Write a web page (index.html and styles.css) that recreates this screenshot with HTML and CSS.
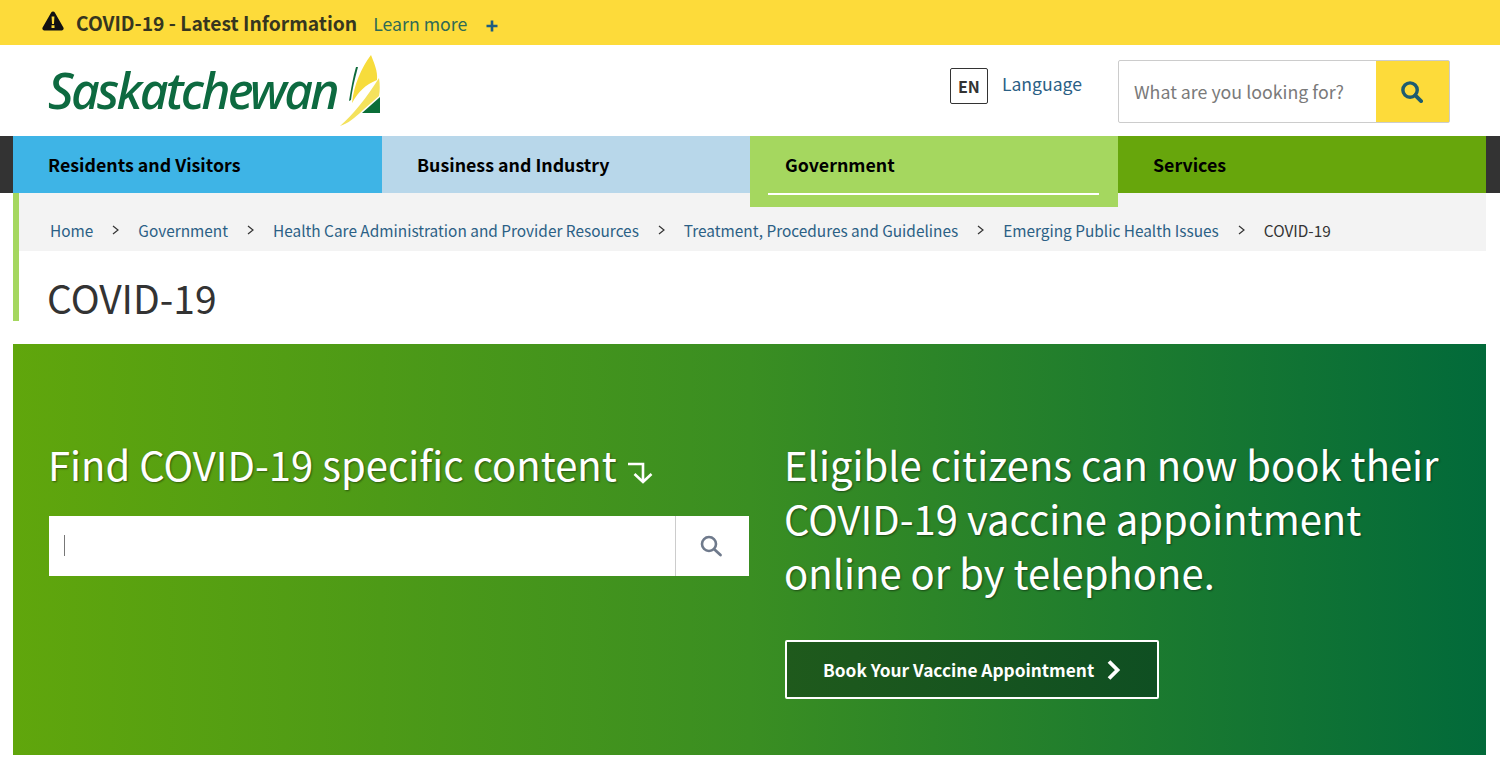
FILE: index.html
```html
<html>
    <head>
        <link rel="stylesheet" href="styles.css">
    </head>
    <body>
        <div class="alert">
            <svg class="alert-icon" viewBox="0 0 22 20"><path d="M11 0.5c.8 0 1.400.4 1.800 1.100l8.600 15c.7 1.300-.2 2.900-1.700 2.900H2.300C.8 19.500-.1 17.900.6 16.600l8.600-15C9.600.9 10.200.5 11 .5z" fill="#111"/><path d="M9.600 5.500h2.800l-.4 7.500h-2zM9.500 14.300h3v2.700h-3z" fill="#fddb3a"/></svg>
            <strong class="alert-title">COVID-19 - Latest Information</strong>
            <a class="alert-link" href="#">Learn more</a>
            <svg class="alert-plus" viewBox="0 0 12 12"><path d="M6 0.500v11M0.500 6h11" stroke="#1d5c80" stroke-width="2.600" fill="none"/></svg>
        </div>
        <header class="header">
            <a class="logo" href="#">
                <span class="logo-text">Saskatchewan</span>
                <svg class="logo-mark" viewBox="0 0 50 75">
                    <path d="M36 2C39 10 43 18 42 27C30 32 24 38 17 50C19 32 26 15 36 2z" fill="#f7dc3b"/>
                    <path d="M44 25C45 32 45 38 44 43L28 57C20 65 12 71 5 73C18 62 32 44 44 25z" fill="#f4e25c"/>
                    <path d="M23 14C21 22 18 32 16 47L14 48C16 36 18 24 21 14z" fill="#0f6b3c"/>
                    <path d="M45 44V60H27z" fill="#0a6e38"/>
                </svg>
            </a>
            <div class="header-right">
                <span class="lang-box">EN</span>
                <a class="lang-link" href="#">Language</a>
                <form class="site-search">
                    <span class="site-search-text">What are you looking for?</span>
                    <span class="site-search-btn">
                        <svg width="23" height="23" viewBox="0 0 24 24"><circle cx="10.500" cy="10.500" r="7.500" stroke="#1d5c70" stroke-width="3.600" fill="none"/><path d="M16 16l6 6" stroke="#1d5c70" stroke-width="4" stroke-linecap="round"/></svg>
                    </span>
                </form>
            </div>
        </header>
        <div class="page">
            <nav class="nav">
                <a class="nav-item residents" href="#">Residents and Visitors</a>
                <a class="nav-item business" href="#">Business and Industry</a>
                <a class="nav-item government" href="#">Government</a>
                <a class="nav-item services" href="#">Services</a>
            </nav>
        </div>
        <div class="content">
            <div class="title-area">
                <div class="breadcrumb">
                    <a href="#">Home</a>
                    <svg class="crumb-sep" viewBox="0 0 7 10"><path d="M1 1l5 4-5 4" stroke="#333" stroke-width="1.200" fill="none"/></svg>
                    <a href="#">Government</a>
                    <svg class="crumb-sep" viewBox="0 0 7 10"><path d="M1 1l5 4-5 4" stroke="#333" stroke-width="1.200" fill="none"/></svg>
                    <a href="#">Health Care Administration and Provider Resources</a>
                    <svg class="crumb-sep" viewBox="0 0 7 10"><path d="M1 1l5 4-5 4" stroke="#333" stroke-width="1.200" fill="none"/></svg>
                    <a href="#">Treatment, Procedures and Guidelines</a>
                    <svg class="crumb-sep" viewBox="0 0 7 10"><path d="M1 1l5 4-5 4" stroke="#333" stroke-width="1.200" fill="none"/></svg>
                    <a href="#">Emerging Public Health Issues</a>
                    <svg class="crumb-sep" viewBox="0 0 7 10"><path d="M1 1l5 4-5 4" stroke="#333" stroke-width="1.200" fill="none"/></svg>
                    <span>COVID-19</span>
                </div>
                <h1 class="title">COVID-19</h1>
            </div>
            <section class="hero">
                <div class="hero-left">
                    <h2 class="hero-find">Find COVID-19 specific content
                        <svg class="hero-arrow" viewBox="0 0 26 24"><path d="M1 4h15v17M7.500 14l8.500 8 8.500-8" stroke="#fff" stroke-width="2.600" fill="none"/></svg>
                    </h2>
                    <div class="hero-search">
                        <span class="hero-input"><i class="caret"></i></span>
                        <span class="hero-search-btn">
                            <svg width="24" height="24" viewBox="0 0 24 24"><circle cx="10" cy="10" r="7" stroke="#6f7a8c" stroke-width="2.600" fill="none"/><path d="M15.500 15.500l6 5.500" stroke="#6f7a8c" stroke-width="2.800" stroke-linecap="round"/></svg>
                        </span>
                    </div>
                </div>
                <div class="hero-right">
                    <h2 class="hero-text">Eligible citizens can now book their COVID-19 vaccine appointment online or by telephone.</h2>
                    <a class="hero-btn" href="#">Book Your Vaccine Appointment
                        <svg class="hero-btn-icon" viewBox="0 0 14 20"><path d="M2 1.500l8.500 8.500-8.500 8.500" stroke="#fff" stroke-width="3.800" fill="none"/></svg>
                    </a>
                </div>
            </section>
        </div>
    </body>
</html>
```

FILE: styles.css
```css
* {
    margin: 0;
    padding: 0;
    box-sizing: border-box;
}

html,body {
    height: 100%;
    overflow: hidden;
}

body {
    background: #fff;
    color: #333;
    font-family: "Noto Sans CJK SC", "Open Sans", sans-serif;
}

a {
    text-decoration: none;
}

.alert {
    height: 45px;
    background: #fddb3a;
    display: flex;
    align-items: center;
    padding-left: 42px;
}

.alert-icon {
    width: 22px;
    height: 20px;
    margin-top: -4px;
}

.alert-title {
    margin-left: 12px;
    font-size: 19.3px;
    font-weight: 600;
    color: #36361f;
}

.alert-link {
    margin-left: 16px;
    font-size: 17.7px;
    color: #2f6a55;
}

.alert-plus {
    width: 12px;
    height: 12px;
    margin-left: 19px;
    margin-top: 6px;
}

.header {
    height: 91px;
    display: flex;
    justify-content: space-between;
    padding: 0 50px 0 48px;
}

.logo {
    display: flex;
    align-items: flex-start;
}

.logo-text {
    width: 287px;
    font-family: "Noto Sans", sans-serif;
    font-style: italic;
    font-size: 50px;
    font-weight: 500;
    line-height: 91px;
    letter-spacing: -2.700px;
    white-space: nowrap;
    color: #0d6a40;
}

.logo-mark {
    width: 50px;
    height: 75px;
    margin-top: 8px;
}

.header-right {
    display: flex;
    align-items: flex-start;
}

.lang-box {
    width: 38px;
    height: 36px;
    margin-top: 23px;
    border: 1px solid #333;
    border-radius: 2px;
    font-size: 16px;
    font-weight: 600;
    display: flex;
    align-items: center;
    justify-content: center;
}

.lang-link {
    margin: 25px 0 0 14px;
    font-size: 17.6px;
    line-height: 28px;
    color: #2b6085;
}

.site-search {
    width: 332px;
    height: 63px;
    margin: 15px 0 0 36px;
    border: 1px solid #ccc;
    border-radius: 2px;
    display: flex;
}

.site-search-text {
    flex: 1;
    padding-left: 15px;
    font-size: 17.8px;
    line-height: 61px;
    color: #7a7a7a;
}

.site-search-btn {
    width: 73px;
    padding-right: 3px;
    background: #fddb3a;
    display: flex;
    align-items: center;
    justify-content: center;
}

.page {
    background: #333;
    padding: 0 14px 0 13px;
}

.nav {
    height: 57px;
    display: grid;
    grid-template-columns: 369px 368px 368px 368px;
}

.nav-item {
    height: 57px;
    padding: 0 0 0 35px;
    font-size: 17.8px;
    font-weight: 700;
    line-height: 56px;
    color: #000;
    position: relative;
}

.residents {
    background: #3eb4e6;
}

.business {
    background: #b8d7ea;
}

.government {
    height: 71px;
    background: #a5d75f;
}

.government::after {
    content: "";
    position: absolute;
    left: 18px;
    right: 19px;
    top: 57px;
    height: 2px;
    background: #fff;
}

.services {
    background: #67a60c;
}

.content {
    padding: 0 14px 0 13px;
}

.title-area {
    height: 128px;
    border-left: 6px solid #a5d75f;
}

.breadcrumb {
    height: 58px;
    background: #f3f3f3;
    padding: 16px 0 0 31px;
    display: flex;
    align-items: center;
    gap: 19px;
    font-size: 15.4px;
    color: #333;
}

.breadcrumb a {
    color: #2b6085;
}

.crumb-sep {
    width: 7px;
    height: 10px;
}

.title {
    margin: 18px 0 0 28px;
    font-size: 39px;
    font-weight: 400;
    line-height: 56px;
}

.hero {
    height: 411px;
    margin-top: 23px;
    background: linear-gradient(90deg, #60a60c 0%, #3a8e22 50%, #026a3a 100%);
    padding: 93px 36px 0;
    display: grid;
    grid-template-columns: 700px 665px;
    column-gap: 36px;
    color: #fff;
}

.hero-find {
    margin-left: -1px;
    font-size: 40px;
    font-weight: 400;
    line-height: 54px;
    white-space: nowrap;
    text-shadow: 1px 1px 2px rgba(0, 0, 0, 0.45);
}

.hero-arrow {
    width: 26px;
    height: 24px;
    margin-left: 1px;
    vertical-align: -3px;
}

.hero-search {
    height: 60px;
    margin-top: 25px;
    background: #fff;
    display: flex;
}

.hero-input {
    flex: 1;
    padding: 19px 0 0 15px;
}

.caret {
    display: block;
    width: 1px;
    height: 21px;
    background: #777;
}

.hero-search-btn {
    width: 74px;
    padding-right: 3px;
    border-left: 1px solid #ccc;
    display: flex;
    align-items: center;
    justify-content: center;
}

.hero-text {
    margin-left: -1px;
    font-size: 40px;
    font-weight: 400;
    line-height: 54px;
    text-shadow: 1px 1px 2px rgba(0, 0, 0, 0.45);
}

.hero-btn {
    width: 374px;
    height: 59px;
    margin-top: 41px;
    border: 2px solid #fff;
    border-radius: 2px;
    background: linear-gradient(90deg, #1f5a1c 0%, #0f4f22 100%);
    display: flex;
    align-items: center;
    padding-left: 36px;
    font-size: 17.3px;
    font-weight: 600;
    color: #fff;
}

.hero-btn-icon {
    width: 14px;
    height: 20px;
    margin-left: 13px;
}
```
